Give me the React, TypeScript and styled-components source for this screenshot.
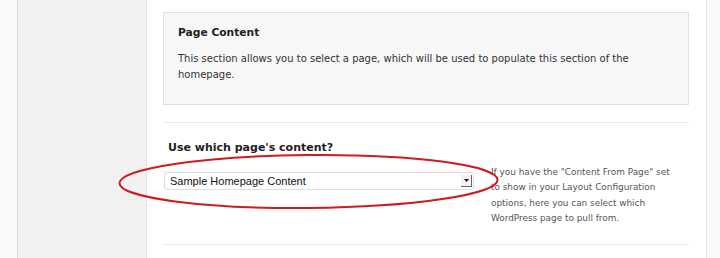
import styled, { createGlobalStyle } from "styled-components";

const GlobalStyle = createGlobalStyle`
  html, body {
    margin: 0;
    padding: 0;
    background: #f9f9f9;
  }
  body {
    font-family: "DejaVu Sans", "Liberation Sans", sans-serif;
    color: #333;
  }
`;

const App: React.FC = () => {
  return (
    <>
      <GlobalStyle />
      <Page>
        <LeftStrip />
        <Sidebar />
        <Main>
          <InfoBox>
            <BoxTitle>Page Content</BoxTitle>
            <BoxText>
              This section allows you to select a page, which will be used to
              populate this section of the homepage.
            </BoxText>
          </InfoBox>
          <Divider />
          <Section>
            <SectionTitle>Use which page's content?</SectionTitle>
            <OptionRow>
              <SelectBox>
                <SelectLabel>Sample Homepage Content</SelectLabel>
                <ArrowButton>
                  <svg width="5" height="3" viewBox="0 0 5 3">
                    <path d="M0 0h5L2.5 3z" fill="#111" />
                  </svg>
                </ArrowButton>
              </SelectBox>
              <HelpText>
                If you have the "Content From Page" set to show in your Layout
                Configuration options, here you can select which WordPress page
                to pull from.
              </HelpText>
              <Highlight width="384" height="58" viewBox="0 0 384 58">
                <ellipse
                  cx="190.5"
                  cy="28.5"
                  rx="189"
                  ry="26.5"
                  fill="none"
                  stroke="#d01a1e"
                  strokeWidth="2"
                  transform="rotate(-0.5 190.5 28.5)"
                />
              </Highlight>
            </OptionRow>
          </Section>
          <Divider />
        </Main>
        <RightStrip />
      </Page>
    </>
  );
};

export default App;

const Page = styled.div`
  display: flex;
  height: 258px;
  overflow: hidden;
`;

const LeftStrip = styled.div`
  width: 17px;
  background: #f9f9f9;
  border-right: 1px solid #d9d9d9;
`;

const Sidebar = styled.div`
  width: 128px;
  background: #f1f1f1;
  border-right: 1px solid #e2e2e2;
`;

const Main = styled.div`
  width: 526px;
  background: #fff;
  padding: 12px 17px 0 16px;
  border-right: 1px solid #e2e2e2;
`;

const RightStrip = styled.div`
  flex: 1;
  background: #f9f9f9;
`;

const InfoBox = styled.div`
  box-sizing: border-box;
  height: 93px;
  background: #f7f7f7;
  border: 1px solid #e0e0e0;
  padding: 13px 14px;
`;

const BoxTitle = styled.h3`
  margin: 0 0 11px;
  font-size: 10.7px;
  font-weight: bold;
  color: #222;
  line-height: 14px;
`;

const BoxText = styled.p`
  margin: 0;
  font-size: 10px;
  line-height: 16px;
  color: #333;
`;

const Divider = styled.div`
  height: 1px;
  background: #ececec;
  margin-top: 17px;
`;

const Section = styled.div`
  padding: 16px 0 0 5px;
  height: 104px;
  box-sizing: border-box;
`;

const SectionTitle = styled.h4`
  margin: 0 0 15px;
  font-size: 11px;
  font-weight: bold;
  color: #222;
  line-height: 18px;
`;

const OptionRow = styled.div`
  position: relative;
  display: flex;
  align-items: flex-start;
  gap: 17px;
`;

const SelectBox = styled.div`
  box-sizing: border-box;
  display: flex;
  flex-shrink: 0;
  align-items: center;
  justify-content: space-between;
  width: 310px;
  height: 18px;
  margin-left: -4px;
  border: 1px solid #ddd;
  border-radius: 3px;
  padding: 0 1px 0 5px;
  background: #fff;
`;

const SelectLabel = styled.span`
  font-family: "Liberation Sans", sans-serif;
  font-size: 11px;
  color: #111;
`;

const ArrowButton = styled.span`
  display: flex;
  align-items: center;
  justify-content: center;
  width: 10px;
  height: 11px;
  background: #f3f3f3;
  border-right: 1px solid #666;
  border-bottom: 1px solid #666;
`;

const HelpText = styled.p`
  margin: -7px 0 0;
  width: 190px;
  font-size: 8.9px;
  line-height: 15.3px;
  color: #555;
`;

const Highlight = styled.svg`
  position: absolute;
  left: -50px;
  top: -19px;
  pointer-events: none;
`;
